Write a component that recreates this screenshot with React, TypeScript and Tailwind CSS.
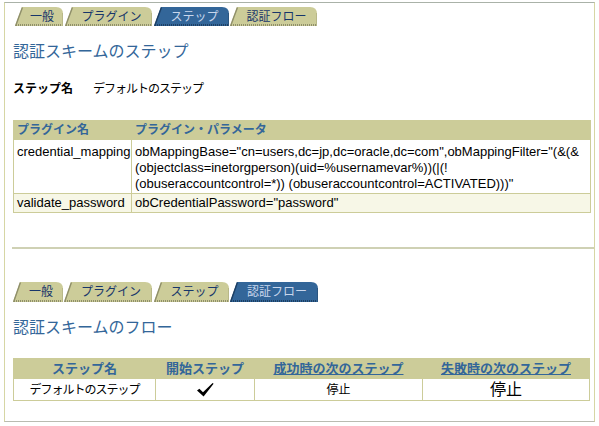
import React from "react";

type TabProps = { label: string; w: number; h: number; active?: boolean; cls: string };

const Tab = ({ label, w, h, active, cls }: TabProps) => {
  const fill = active ? "#336699" : "#cccc99";
  const shade = active ? "#1d3f63" : "#8f8f6a";
  return (
    <div className={`relative flex items-center justify-center pl-[6px] ${cls}`}>
      <svg
        className="absolute inset-0"
        width={w}
        height={h}
        viewBox={`0 0 ${w} ${h}`}
      >
        <path d={`M0 ${h} L7 0 L${w - 7} 0 Q${w} 0 ${w} 7 L${w} ${h} Z`} fill={fill} />
        <path d={`M0.6 ${h} L7.4 0.4`} stroke={shade} strokeWidth="1.4" fill="none" />
        <path
          d={`M1 ${h - 1} L${w} ${h - 1}`}
          stroke={shade}
          strokeWidth="2"
          strokeDasharray="1 1"
          fill="none"
        />
        <path
          d={`M${w - 0.5} 6 L${w - 0.5} ${h}`}
          stroke={active ? "#2a5580" : "#b8b888"}
          strokeWidth="1"
          fill="none"
        />
      </svg>
      <span
        className={`relative text-[12px] leading-none ${
          active ? "text-[#c8d6ec]" : "text-[#17366a]"
        }`}
      >
        {label}
      </span>
    </div>
  );
};

const Check = () => (
  <svg width="17" height="14" viewBox="0 0 17 14" className="inline-block">
    <path d="M0 7.5 L2.4 5.8 L6 9.2 L15.6 0 L16.6 0.8 L6.6 13.6 Z" fill="#000" />
  </svg>
);

export default function App() {
  return (
    <div className="w-[599px] h-[426px] bg-white pt-[2px] pl-[4px] font-['Liberation_Sans','Noto_Sans_CJK_JP',sans-serif] text-black">
      <div className="box-border w-[591px] h-[420px] border-t border-t-[#aab2a8] border-x border-x-[#d6d6a4] border-b border-b-[#b9bbb1] pl-[8px] pr-[4px] pt-[4px] flex flex-col">
        {/* tabs row 1 */}
        <div className="flex ml-[2px] h-[19px]">
          <Tab label="一般" w={48} h={19} cls="w-[48px] h-[19px]" />
          <div className="w-[2px]" />
          <Tab label="プラグイン" w={87} h={19} cls="w-[87px] h-[19px]" />
          <div className="w-[2px]" />
          <Tab label="ステップ" w={75} h={19} cls="w-[75px] h-[19px]" active />
          <div className="w-[1px]" />
          <Tab label="認証フロー" w={87} h={19} cls="w-[87px] h-[19px]" />
        </div>

        <div className="mt-[16px] text-[16px] leading-[20px] text-[#336699]">
          認証スキームのステップ
        </div>

        <div className="mt-[19px] flex text-[12px] leading-[16px]">
          <span className="font-bold w-[80px]">ステップ名</span>
          <span className="tracking-[-1px]">デフォルトのステップ</span>
        </div>

        <table className="mt-[23px] w-[577px] table-fixed border-collapse border border-[#cccc99] text-[13px]">
          <colgroup>
            <col className="w-[118px]" />
            <col className="w-[459px]" />
          </colgroup>
          <thead>
            <tr className="bg-[#cccc99] h-[19px]">
              <th className="text-left font-bold text-[12px] leading-[16px] text-[#336699] px-[3px] py-[1px] border border-[#cccc99]">
                プラグイン名
              </th>
              <th className="text-left font-bold text-[12px] leading-[16px] text-[#336699] px-[3px] py-[1px] border border-[#cccc99]">
                プラグイン・パラメータ
              </th>
            </tr>
          </thead>
          <tbody>
            <tr className="bg-white">
              <td className="align-top px-[3px] pt-[4px] pb-[1px] leading-[16px] border border-[#cccc99] whitespace-nowrap">
                credential_mapping
              </td>
              <td className="align-top px-[3px] pt-[4px] pb-[1px] leading-[16px] border border-[#cccc99] whitespace-nowrap">
                <div>obMappingBase="cn=users,dc=jp,dc=oracle,dc=com",obMappingFilter="(&amp;(&amp;</div>
                <div>(objectclass=inetorgperson)(uid=%usernamevar%))(|(!</div>
                <div>(obuseraccountcontrol=*)) (obuseraccountcontrol=ACTIVATED)))"</div>
              </td>
            </tr>
            <tr className="bg-[#f7f7e7]">
              <td className="px-[3px] pt-[1px] pb-[1px] leading-[16px] border border-[#cccc99] whitespace-nowrap">
                validate_password
              </td>
              <td className="px-[3px] pt-[1px] pb-[1px] leading-[16px] border border-[#cccc99] whitespace-nowrap">
                obCredentialPassword="password"
              </td>
            </tr>
          </tbody>
        </table>

        <div className="mt-[34px] -ml-[1px] -mr-[4px] h-[2px] bg-[#cfd1b4]" />

        {/* tabs row 2 */}
        <div className="flex mt-[33px] h-[20px]">
          <Tab label="一般" w={50} h={20} cls="w-[50px] h-[20px]" />
          <div className="w-[1px]" />
          <Tab label="プラグイン" w={88} h={20} cls="w-[88px] h-[20px]" />
          <div className="w-[2px]" />
          <Tab label="ステップ" w={75} h={20} cls="w-[75px] h-[20px]" />
          <div className="w-[1px]" />
          <Tab label="認証フロー" w={88} h={20} cls="w-[88px] h-[20px]" active />
        </div>

        <div className="mt-[16px] text-[16px] leading-[20px] text-[#336699]">
          認証スキームのフロー
        </div>

        <table className="mt-[20px] w-[576px] table-fixed border-collapse border border-[#cccc99]">
          <colgroup>
            <col className="w-[142px]" />
            <col className="w-[99px]" />
            <col className="w-[168px]" />
            <col className="w-[167px]" />
          </colgroup>
          <thead>
            <tr className="bg-[#cccc99]">
              <th className="text-center font-bold text-[13px] leading-[17px] text-[#336699] py-[1px] border border-[#cccc99]">
                ステップ名
              </th>
              <th className="text-center font-bold text-[13px] leading-[17px] text-[#336699] py-[1px] border border-[#cccc99]">
                開始ステップ
              </th>
              <th className="text-center font-bold text-[13px] leading-[17px] text-[#336699] py-[1px] border border-[#cccc99]">
                <span className="underline">成功時の次のステップ</span>
              </th>
              <th className="text-center font-bold text-[13px] leading-[17px] text-[#336699] py-[1px] border border-[#cccc99]">
                <span className="underline">失敗時の次のステップ</span>
              </th>
            </tr>
          </thead>
          <tbody>
            <tr className="bg-white h-[22px]">
              <td className="text-center text-[12px] leading-[16px] tracking-[-1px] border border-[#cccc99] py-[2px]">
                デフォルトのステップ
              </td>
              <td className="text-center border border-[#cccc99] leading-none">
                <Check />
              </td>
              <td className="text-center text-[12px] leading-[16px] border border-[#cccc99]">
                停止
              </td>
              <td className="text-center text-[16px] leading-[18px] border border-[#cccc99]">
                停止
              </td>
            </tr>
          </tbody>
        </table>
      </div>
    </div>
  );
}
